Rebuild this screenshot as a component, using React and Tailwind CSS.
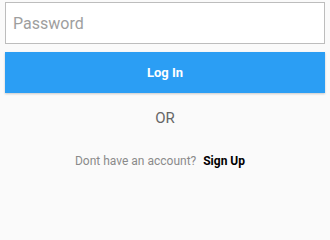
import { useState } from 'react';

function App() {
  const [password, setPassword] = useState('');

  return (
    <div className="w-full min-h-screen bg-[#fafafa] font-['Roboto',sans-serif] px-[5px] pt-[2px]">
      {/* password field */}
      <input
        type="password"
        value={password}
        onChange={(e) => setPassword(e.target.value)}
        placeholder="Password"
        className="block w-full h-[42px] bg-white border border-[#bdbdbd] px-[7px] text-[16px] text-[#333] placeholder:text-[#9e9e9e] outline-none"
      />

      {/* login button */}
      <button className="mt-[8px] w-full h-[41px] bg-[#2b9ef4] text-white text-[13px] font-bold shadow-[0_1px_2px_rgba(0,0,0,0.2)]">
        Log In
      </button>

      <div className="mt-[16px] text-center text-[15px] text-[#666] leading-[18px]">OR</div>

      <div className="mt-[25px] flex items-center justify-center gap-[7px] pr-[10px] text-[12px] leading-[18px]">
        <span className="text-[#8a8a8a]">Dont have an account?</span>
        <button className="font-bold text-black">Sign Up</button>
      </div>
    </div>
  );
}

export default App;
